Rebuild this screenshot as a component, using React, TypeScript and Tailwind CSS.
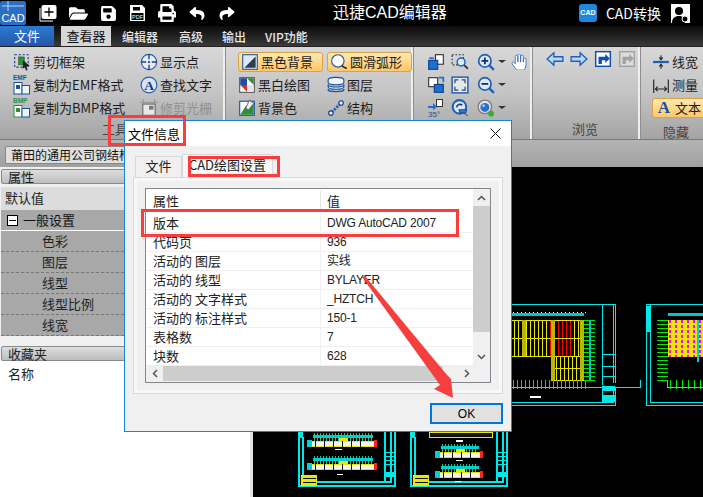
import type { ReactNode } from 'react'
import { FaFolderOpen, FaPrint, FaReply, FaSave, FaShare, FaHandPaper } from 'react-icons/fa'

const cjk = '[font-family:"Noto_Sans_CJK_SC","Liberation_Sans",sans-serif]'

// small ribbon drawings, all on a 16 x 16 box
const Ico = ({ children, size = 18 }: { children: ReactNode; size?: number }) => (
  <svg width={size} height={size} viewBox="0 0 16 16" className="shrink-0">
    {children}
  </svg>
)

const CropIcon = () => (
  <Ico>
    <rect x="1.5" y="1.5" width="12" height="11" fill="none" stroke="#1d3f8a" strokeDasharray="2 1.5" />
    <rect x="5" y="3.500" width="5" height="7" fill="#2f8f3a" stroke="#155a22" strokeWidth=".5" />
    <path d="M9 6.500l6 5-3 .5 1 3-1.500.5-1-3-2 1.500z" fill="#222" />
  </Ico>
)
const CopyIcon = ({ label, color, tint }: { label: string; color: string; tint: string }) => (
  <svg width="18" height="21" viewBox="0 0 18 21" className="shrink-0">
    <text x="0" y="6" fontSize="6.500" fontWeight="700" fill={color} fontFamily="Liberation Sans">{label}</text>
    <rect x="1" y="8.500" width="8" height="11.500" fill="#fff" stroke={tint} />
    <rect x="9" y="11.500" width="7.500" height="8.500" fill="#eef4fc" stroke="#1d4fa0" />
    <rect x="3" y="11" width="4" height="4" fill={tint} />
  </svg>
)
const PointIcon = () => (
  <Ico>
    <circle cx="8" cy="8" r="6.800" fill="#e8eef8" stroke="#2a5aa8" />
    <path d="M8 1v4.500M8 10.500V15M1 8h4.500M10.500 8H15" stroke="#1b3f86" strokeWidth="1.200" />
    <circle cx="8" cy="8" r="1" fill="#1b3f86" />
  </Ico>
)
const FindTextIcon = () => (
  <Ico>
    <circle cx="8" cy="8" r="7" fill="#d6e4f6" stroke="#2a5aa8" />
    <text x="8" y="12.500" textAnchor="middle" fontSize="12" fontWeight="700" fill="#143a86" fontFamily="Liberation Serif">A</text>
  </Ico>
)
const TrimIcon = () => (
  <Ico>
    <path d="M3 0v4M13 0v4M0 3h16" stroke="#9a9a9a" />
    <rect x="2.500" y="4.500" width="11" height="10" fill="#e8e8e8" stroke="#6a6a6a" />
    <rect x="8" y="6" width="4" height="3.500" fill="#7a7a7a" />
  </Ico>
)
const BlackBgIcon = () => (
  <Ico>
    <rect x="1.500" y="1.500" width="13" height="13" fill="#dfe9f6" stroke="#2a5aa8" />
    <path d="M3 13L13 3v10z" fill="#2b3d55" />
  </Ico>
)
const ArcIcon = () => (
  <Ico>
    <circle cx="7" cy="7" r="5.500" fill="#fff" stroke="#2a5aa8" />
    <path d="M10.500 11.500c2 1.500 3 2 4.500 2" fill="none" stroke="#222" strokeWidth="1.300" />
  </Ico>
)
const MonoIcon = () => (
  <Ico>
    <rect x="1.500" y="1.500" width="13" height="13" fill="#fff" stroke="#555" />
    <path d="M2 2h6v6H2z" fill="#1b4fa0" />
    <path d="M8 8h6v6H8z" fill="#e4e4e4" />
    <path d="M2 8h6v6z" fill="#c33" />
    <path d="M8 2h6v6z" fill="#2f8f3a" />
  </Ico>
)
const LayerIcon = () => (
  <Ico>
    <path d="M1 3.500c0-3 14-3 14 0v2c0 3-14 3-14 0zM1 7.500c0 3 14 3 14 0v2c0 3-14 3-14 0zM1 11.500c0 3 14 3 14 0v1c0 2-14 2-14 0z" fill="#f2f6fb" stroke="#1d4fa0" />
  </Ico>
)
const BgColorIcon = () => (
  <Ico>
    <rect x="1.500" y="2" width="13" height="12.500" fill="#fff" stroke="#1d4fa0" />
    <path d="M2 14l5-8 3 3 4-6v11z" fill="#2f8f3a" />
    <path d="M10 1l4 3-5 6-2-2z" fill="#eee" stroke="#333" strokeWidth=".6" />
  </Ico>
)
const StructIcon = () => (
  <Ico>
    <path d="M2 14L14 2" stroke="#2a5aa8" strokeWidth="2.500" strokeDasharray="2 1" />
    <circle cx="3.500" cy="12.500" r="2" fill="#dbe9fa" stroke="#1d3f8a" />
    <circle cx="12.500" cy="3.500" r="2" fill="#dbe9fa" stroke="#1d3f8a" />
  </Ico>
)
const PageIcon = ({ tone = '#1d6fd0', flip }: { tone?: string; flip?: boolean }) => (
  <Ico>
    {flip ? (
      <>
        <rect x="1.500" y="1.500" width="8" height="8" fill="#fff" stroke="#333" />
        <rect x="6.500" y="7.500" width="8" height="7" fill={tone} stroke="#0f3f90" />
        <path d="M10.500 1.500h4v4" fill="none" stroke={tone} strokeWidth="1.500" />
      </>
    ) : (
      <>
        <rect x="7.500" y="1.500" width="7" height="8.500" fill="#fff" stroke="#333" />
        <rect x="1.500" y="6.500" width="8" height="8" fill={tone} stroke="#0f3f90" />
        <path d="M2 4.500h4" stroke={tone} strokeWidth="1.500" />
      </>
    )}
  </Ico>
)
const SelectZoomIcon = () => (
  <Ico>
    <rect x="1" y="1.500" width="10" height="9" fill="none" stroke="#333" strokeDasharray="1.500 1.500" />
    <circle cx="9" cy="8" r="3.500" fill="#dbe9fa" stroke="#1d5fb8" strokeWidth="1.300" />
    <path d="M11.500 10.500l3.500 3.500" stroke="#333" strokeWidth="1.600" />
  </Ico>
)
const FitIcon = () => (
  <Ico>
    <rect x="1" y="1" width="14" height="14" fill="#e3e8ee" stroke="#1d5fb8" strokeWidth="1.300" />
    <path d="M3.500 6.500v-3h3M9.500 3.500h3v3M12.500 9.500v3h-3M6.500 12.500h-3v-3" fill="none" stroke="#445" strokeWidth="1.100" />
  </Ico>
)
const RotateIcon = () => (
  <svg width="18" height="18" viewBox="0 0 18 18" className="shrink-0">
    <rect x="9.500" y="0.500" width="6" height="7" fill="#fff" stroke="#333" />
    <path d="M1 7h5V4l4 4-4 3V9H1z" fill="#1d6fd0" />
    <text x="1" y="17.500" fontSize="8" fill="#1d4fa0" fontFamily="Liberation Sans">35°</text>
  </svg>
)
const LoopZoomIcon = () => (
  <Ico>
    <circle cx="7.500" cy="7" r="6" fill="#dbe9fa" stroke="#1d5fb8" strokeWidth="1.800" />
    <path d="M5 7.500a3 3 0 015-2" fill="none" stroke="#123f8c" strokeWidth="1.500" />
    <path d="M7 9.500h7l-1 3H8zM11 12l4 3" fill="#3a78c8" stroke="#123f8c" strokeWidth=".8" />
  </Ico>
)
const MagnifyIcon = ({ sign }: { sign: '+' | '-' }) => (
  <Ico>
    <circle cx="7" cy="7" r="5.500" fill="#dbe9fa" stroke="#1d5fb8" strokeWidth="1.500" />
    <path d="M11 11l4 4" stroke="#1d5fb8" strokeWidth="2" />
    <path d="M4 7h6" stroke="#0d2f70" strokeWidth="1.600" />
    {sign === '+' && <path d="M7 4v6" stroke="#0d2f70" strokeWidth="1.600" />}
  </Ico>
)
const GlobeIcon = () => (
  <Ico>
    <circle cx="7" cy="7" r="6" fill="#e4e4e4" stroke="#7d7d7d" strokeWidth="1.200" />
    <circle cx="7" cy="7.500" r="4" fill="#2a6fd0" />
    <circle cx="5.800" cy="6" r="1.300" fill="#9cc6f5" />
    <circle cx="12.500" cy="13" r="2.500" fill="#2fae3a" />
  </Ico>
)
const DropMark = () => <span className="ml-[3px] h-0 w-0 border-x-[4px] border-t-[3px] border-x-transparent border-t-[#333]" />
const ArrowIcon = ({ dir }: { dir: 'l' | 'r' }) => (
  <Ico>
    <path
      d={dir === 'l' ? 'M1 8l6-5.500v3.500h8v4H7v3.500z' : 'M15 8L9 2.500V6H1v4h8v3.500z'}
      fill="#bcd7f5"
      stroke="#1d5fb8"
      strokeWidth="1.200"
    />
  </Ico>
)
const NavDocIcon = ({ muted }: { muted?: boolean }) => {
  const edge = muted ? '#a2a2a2' : '#0f4fb0'
  return (
    <Ico>
      <rect x="1.500" y="1.500" width="13" height="13" fill={muted ? '#dcdcdc' : '#fff'} stroke={edge} strokeWidth="1.300" />
      <path d="M4 6h6V3.500l4 4-4 4V9H7v3.500H4z" fill={edge} />
    </Ico>
  )
}
const LineWidthIcon = () => (
  <Ico>
    <path d="M1 8h14" stroke="#1d5fb8" strokeWidth="2" />
    <path d="M8 2v3M8 11v3M6.500 4L8 6l1.500-2M6.500 12L8 10l1.500 2" fill="none" stroke="#222" />
  </Ico>
)
const MeasureIcon = () => (
  <Ico>
    <path d="M1.500 3v12M14.500 3v12M3 11.500h10M5 9.500l-2 2 2 2M11 9.500l2 2-2 2" fill="none" stroke="#222" />
  </Ico>
)

const RibbonRow = ({ icon, label, muted }: { icon: ReactNode; label: string; muted?: boolean }) => (
  <div className={`flex h-[23px] items-center gap-[2px] text-[13px] ${muted ? 'text-[#8f8f8f]' : 'text-[#1c1c1c]'}`}>
    <span className="flex w-[18px] justify-center">{icon}</span>
    <span className="whitespace-nowrap">{label}</span>
  </div>
)

const HotRow = ({ icon, label, className }: { icon: ReactNode; label: string; className: string }) => (
  <div
    className={`flex h-[20px] items-center gap-[2px] rounded-[3px] border border-[#d9a24a] bg-gradient-to-b from-[#ffe9b0] to-[#ffc766] pl-[2px] text-[13px] text-[#1c1c1c] ${className}`}
  >
    <span className="flex w-[18px] justify-center">{icon}</span>
    <span className="whitespace-nowrap">{label}</span>
  </div>
)

const Group = ({ width, label, children, className = '', labelClass = '' }: { width: string; label?: string; children?: ReactNode; className?: string; labelClass?: string }) => (
  <div className={`relative flex h-full shrink-0 flex-col border-r-2 border-r-[#efefef] shadow-[1px_0_0_#8e8e8e] ${width}`}>
    <div className={`flex h-[72px] pt-[3px] ${className}`}>{children}</div>
    <div className={`text-center text-[13px] leading-[20px] text-[#444] ${labelClass}`}>{label}</div>
  </div>
)

const FloatHead = ({ text }: { text: string }) => (
  <div className="mx-[1px] flex h-[15px] items-center rounded-[2px] border border-[#8a8a8a] bg-gradient-to-b from-[#dedede] to-[#bdbdbd] pl-[6px] text-[13px] text-[#222]">
    {text}
  </div>
)

const count = (n: number) => Array.from({ length: n }, (_, i) => i)

// one floor plan of the lower sheets: comb of columns, cyan beam, white and yellow band
const PlanStrip = ({ x, y, w }: { x: number; y: number; w: number }) => (
  <g>
    {count(Math.floor(w / 3)).map((i) => (
      <path key={i} d={`M${x + 1 + i * 3} ${y}V${y + 11}`} stroke="#22c070" />
    ))}
    <rect x={x} y={y + 2} width={w} height="3" fill="#00d0d0" />
    <rect x={x - 1} y={y + 8} width={w + 2} height="5" fill="#f4f4f4" />
    <path d={`M${x - 1} ${y + 8}H${x + w + 1}M${x - 1} ${y + 13}H${x + w + 1}`} stroke="#e8e800" />
    {count(Math.floor(w / 9)).map((i) => (
      <path key={i} d={`M${x + 2 + i * 9} ${y + 8}V${y + 14}`} stroke="#111" />
    ))}
    <rect x={x + w / 2 - 4} y={y + 5} width="9" height="3" fill="#e8e800" />
    <rect x={x - 6} y={y + 7} width="5" height="7" fill="#00d0d0" />
    <rect x={x + w + 1} y={y + 7} width="3" height="7" fill="#ff2020" />
  </g>
)

const Drawings = () => (
  <svg viewBox="253 167 450 330" className="block h-full w-full" shapeRendering="crispEdges">
    {/* sheet A */}
    <path d="M512 304H615V405H512M512 402H613V304M602 304V402" fill="none" stroke="#00e8e8" />
    <rect x="512" y="313" width="72" height="3" fill="#00c8c8" />
    {count(19).map((i) => (
      <path key={`w${i}`} d={`M${513 + i * 4} 312v1M${513 + i * 4} 388v1`} stroke="#fff" />
    ))}
    {count(18).map((i) => (
      <path key={`a${i}`} d={`M${514 + i * 4} 320V356`} stroke={i > 8 && i < 15 ? '#ff0000' : '#e8e800'} />
    ))}
    {count(7).map((i) => (
      <path key={`b${i}`} d={`M${552 + i * 4} 357V380`} stroke="#e8e800" />
    ))}
    <path d="M512 320H584M512 338H584M512 356H584M551 368H584M551 380H584" stroke="#e8e800" />
    <rect x="551" y="320" width="4" height="60" fill="#b8b800" />
    <rect x="580" y="320" width="4" height="60" fill="#b8b800" />
    <rect x="522" y="320" width="4" height="36" fill="#b8b800" />
    {count(16).map((i) => (
      <path key={`c${i}`} d={`M584 ${320 + i * 4}H595`} stroke="#00e800" />
    ))}
    <rect x="589" y="320" width="2" height="60" fill="#00c8c8" />
    {count(19).map((i) => (
      <path key={`d${i}`} d={`M${513 + i * 4} 380V389`} stroke="#00e800" />
    ))}
    <path d="M512 387H584M584 387H640V380" stroke="#00e8e8" />
    <rect x="530" y="396" width="11" height="2" fill="#fff" />
    <path d="M602 354H615M602 366H615M602 376H615" stroke="#00e8e8" />
    <rect x="602" y="386" width="13" height="5" fill="#00e8e8" />
    <rect x="602" y="395" width="13" height="7" fill="#00e8e8" />
    {/* sheet B */}
    <path d="M703 304H646V405H703M703 402H650V304" fill="none" stroke="#00e8e8" />
    <rect x="646" y="306" width="5" height="26" fill="#00e8e8" />
    <rect x="668" y="320" width="35" height="37" fill="#e8e800" />
    {count(6).map((i) => (
      <path key={`e${i}`} d={`M${670 + i * 6} 320V357`} stroke="#ff00ff" strokeWidth="2" strokeDasharray="3 2" />
    ))}
    <rect x="697" y="320" width="2" height="42" fill="#00d0d0" />
    {count(16).map((i) => (
      <path key={`f${i}`} d={`M657 ${320 + i * 4}H668`} stroke="#00e800" />
    ))}
    {count(6).map((i) => (
      <path key={`g${i}`} d={`M${670 + i * 6} 380V389`} stroke="#00e800" />
    ))}
    <rect x="668" y="313" width="35" height="3" fill="#00c8c8" />
    <path d="M668 387H703M667 380V388" stroke="#00e8e8" />
    {/* sheet C */}
    <path d="M299 432V486H395V432M303 437V482H391V432M385 432V482" fill="none" stroke="#00e8e8" strokeWidth="2" />
    <rect x="298" y="432" width="5" height="6" fill="#00e8e8" />
    <rect x="301" y="475" width="16" height="11" fill="#e8e800" />
    <path d="M303 478H316M303 482H316" stroke="#111" />
    <PlanStrip x={313} y={433} w={60} />
    <PlanStrip x={313} y={456} w={60} />
    <rect x="335" y="449" width="7" height="1" fill="#fff" />
    <rect x="337" y="474" width="6" height="1" fill="#fff" />
    <path d="M385 452H394M385 456H394M385 460H394M385 464H394" stroke="#00e8e8" />
    <rect x="385" y="472" width="9" height="5" fill="#00e8e8" />
    {/* sheet D */}
    <path d="M411 432V486H507V432M415 437V482H503V432M497 432V482" fill="none" stroke="#00e8e8" strokeWidth="2" />
    <rect x="410" y="432" width="5" height="6" fill="#00e8e8" />
    <rect x="413" y="475" width="16" height="11" fill="#e8e800" />
    <path d="M415 478H428M415 482H428" stroke="#111" />
    <rect x="429" y="432" width="63" height="5" fill="#111" stroke="#e8e800" />
    <PlanStrip x={441} y={444} w={38} />
    <PlanStrip x={441} y={464} w={38} />
    <rect x="456" y="440" width="7" height="2" fill="#fff" />
    <rect x="456" y="460" width="7" height="1" fill="#fff" />
    <rect x="455" y="481" width="6" height="1" fill="#fff" />
    <path d="M497 452H506M497 456H506M497 460H506M497 464H506" stroke="#00e8e8" />
    <rect x="497" y="472" width="9" height="5" fill="#00e8e8" />
  </svg>
)

const rows: [string, string][] = [
  ['版本', 'DWG AutoCAD 2007'],
  ['代码页', '936'],
  ['活动的 图层', '实线'],
  ['活动的 线型', 'BYLAYER'],
  ['活动的 文字样式', '_HZTCH'],
  ['活动的 标注样式', '150-1'],
  ['表格数', '7'],
  ['块数', '628'],
]

export default function App() {
  return (
    <div className={`relative flex h-[497px] w-[703px] flex-col overflow-hidden bg-[#b0b0b0] ${cjk}`}>
      {/* title bar */}
      <header className="flex h-[26px] shrink-0 items-center bg-black text-white">
        <div className="relative flex h-[24px] w-[26px] flex-col items-center justify-end rounded-[2px] bg-[#2a6fc4] text-[11px] leading-[14px] [font-family:'Liberation_Sans']">
          <svg width="26" height="10" viewBox="0 0 26 10" className="absolute left-0 top-0">
            <path d="M8 0v10M2 5h22" stroke="#bcd7f5" />
          </svg>
          CAD
        </div>
        <div className="ml-[13px] flex items-center gap-[12px]">
          <svg width="18" height="18" viewBox="0 0 18 18">
            <path d="M1 4v13h13" fill="none" stroke="#fff" />
            <rect x="2.500" y="1" width="15" height="14" rx="2" fill="#fff" />
            <path d="M10 3.500v9M5.500 8h9" stroke="#000" strokeWidth="1.300" />
          </svg>
          <FaFolderOpen className="h-[17px] w-[19px]" />
          <FaSave className="h-[17px] w-[17px]" />
          <svg width="17" height="18" viewBox="0 0 17 18">
            <path d="M1 1h12l3 3v13H1z" fill="#fff" />
            <rect x="4" y="3" width="7" height="3.500" fill="#000" />
            <rect x="2.500" y="9" width="12" height="7" fill="#000" />
            <text x="8.500" y="15" textAnchor="middle" fontSize="5.500" fill="#fff" fontFamily="Liberation Sans">PDF</text>
          </svg>
          <FaPrint className="h-[18px] w-[18px]" />
          <FaReply className="h-[15px] w-[18px]" />
          <FaShare className="h-[15px] w-[18px]" />
        </div>
        <div className="ml-[97px] text-[16px] [font-family:'Liberation_Sans','Noto_Sans_CJK_SC']">迅捷CAD编辑器</div>
        <div className="ml-auto flex items-center">
          <div className="flex h-[18px] w-[18px] items-center justify-center rounded-[3px] bg-[#1e88e0] text-[7px] font-bold [font-family:'Liberation_Sans']">CAD</div>
          <span className="ml-[9px] text-[14px]">CAD转换</span>
          <div className="ml-[10px] mr-[13px] flex h-[19px] w-[19px] items-end justify-center bg-white">
            <svg width="17" height="17" viewBox="0 0 17 17">
              <circle cx="7" cy="5" r="4" fill="#000" />
              <path d="M0 17c0-5 3-7 7-7s6 2 6 7z" fill="#000" />
              <circle cx="13" cy="13" r="3" fill="#000" stroke="#fff" />
            </svg>
          </div>
        </div>
      </header>

      {/* menu tabs */}
      <nav className="flex h-[20px] shrink-0 items-end bg-gradient-to-b from-[#0c0c0c] to-[#3a3a3a] text-[12px] text-[#e8e8e8]">
        <div className="flex h-[20px] w-[54px] items-center justify-center bg-gradient-to-b from-[#2f7ad0] to-[#2257a8] text-[13px] text-white">文件</div>
        <div className="ml-[7px] flex h-[20px] w-[50px] items-center justify-center bg-[#d6d6d6] text-[13px] text-[#111]">查看器</div>
        <span className="ml-[11px] font-medium">编辑器</span>
        <span className="ml-[21px] font-medium">高级</span>
        <span className="ml-[19px] font-medium">输出</span>
        <span className="ml-[19px] font-medium">VIP功能</span>
      </nav>

      {/* ribbon */}
      <section className="flex h-[94px] shrink-0 border-y border-[#222] border-b-[#777] bg-gradient-to-b from-[#d8d8d8] via-[#c4c4c4] to-[#a4a4a4]">
        <Group width="w-[225px]" label="工具" labelClass="pl-[7px]" className="pl-[13px]">
          <div className="w-[127px]">
            <RibbonRow icon={<CropIcon />} label="剪切框架" />
            <RibbonRow icon={<CopyIcon label="EMF" color="#1d4fa0" tint="#1d4fa0" />} label="复制为EMF格式" />
            <RibbonRow icon={<CopyIcon label="BMP" color="#2f8f3a" tint="#2f8f3a" />} label="复制为BMP格式" />
          </div>
          <div>
            <RibbonRow icon={<PointIcon />} label="显示点" />
            <RibbonRow icon={<FindTextIcon />} label="查找文字" />
            <RibbonRow icon={<TrimIcon />} label="修剪光栅" muted />
          </div>
        </Group>
        <Group width="w-[188px]" className="gap-[4px] pl-[13px]">
          <div className="w-[85px]">
            <div className="flex h-[23px] items-center"><HotRow className="w-[85px]" icon={<BlackBgIcon />} label="黑色背景" /></div>
            <RibbonRow icon={<MonoIcon />} label="黑白绘图" />
            <RibbonRow icon={<BgColorIcon />} label="背景色" />
          </div>
          <div className="w-[85px]">
            <div className="flex h-[23px] items-center"><HotRow className="w-[85px]" icon={<ArcIcon />} label="圆滑弧形" /></div>
            <RibbonRow icon={<LayerIcon />} label="图层" />
            <RibbonRow icon={<StructIcon />} label="结构" />
          </div>
        </Group>
        <Group width="w-[119px]" className="pl-[14px]">
          <div className="grid h-[69px] grid-cols-[24px_26px_34px_18px] grid-rows-3 items-center">
            <PageIcon />
            <SelectZoomIcon />
            <span className="flex items-center"><MagnifyIcon sign="+" /><DropMark /></span>
            <span className="relative h-[16px] w-[16px]">
              <FaHandPaper className="h-[16px] w-[16px] text-white" stroke="#1d5fb8" strokeWidth={24} />
            </span>
            <PageIcon flip />
            <FitIcon />
            <span className="flex items-center"><MagnifyIcon sign="-" /><DropMark /></span>
            <span />
            <RotateIcon />
            <LoopZoomIcon />
            <span className="flex items-center"><GlobeIcon /><DropMark /></span>
            <span />
          </div>
        </Group>
        <Group width="w-[108px]" label="浏览" className="gap-[6px] pl-[14px]">
          <ArrowIcon dir="l" />
          <ArrowIcon dir="r" />
          <NavDocIcon />
          <NavDocIcon muted />
        </Group>
        <div className="flex-1 pl-[12px] pt-[3px]">
          <RibbonRow icon={<LineWidthIcon />} label="线宽" />
          <RibbonRow icon={<MeasureIcon />} label="测量" />
          <div className="flex h-[23px] items-center">
            <HotRow className="w-[60px]" icon={<span className="text-[17px] leading-none font-bold text-[#1d4fa0] [font-family:'Liberation_Serif']">A</span>} label="文本" />
          </div>
          <div className="mt-[3px] pr-[12px] text-center text-[13px] leading-[20px] text-[#444]">隐藏</div>
        </div>
      </section>

      {/* document tab strip */}
      <div className="flex h-[27px] shrink-0 items-end bg-gradient-to-b from-[#b4b4b4] to-[#a0a0a0] pb-[3px] pl-[5px]">
        <div className="h-[18px] whitespace-nowrap rounded-t-[2px] border border-[#888] bg-[#e0e0e0] pl-[5px] pr-[20px] text-[12px] leading-[16px] text-[#111]">莆田的通用公司钢结构</div>
      </div>

      <main className="flex min-h-0 flex-1 bg-black">
        {/* side panel */}
        <aside className="flex w-[253px] shrink-0 flex-col border-r-[3px] border-r-[#e4e4e4] bg-[#f0f0f0] pt-[2px]">
          <FloatHead text="属性" />
          <div className="mx-[1px] mt-[3px] flex h-[23px] items-center bg-[#dcdcdc] pb-[2px] pl-[4px] text-[13px] text-[#222]">默认值</div>
          <div className="mx-[1px] flex h-[21px] items-center gap-[5px] border-b border-white bg-[#a8a8a8] pl-[6px] text-[13px] text-[#111]">
            <span className="flex h-[11px] w-[11px] items-center justify-center border border-black bg-white">
              <span className="h-px w-[7px] bg-black" />
            </span>
            一般设置
          </div>
          {['色彩', '图层', '线型', '线型比例', '线宽'].map((name) => (
            <div key={name} className="mx-[1px] flex h-[21px] items-center border-b border-dashed border-[#777] bg-[#a8a8a8] pl-[41px] text-[13px] text-[#222]">
              {name}
            </div>
          ))}
          <div className="h-[10px]" />
          <FloatHead text="收藏夹" />
          <div className="flex-1 bg-white pl-[8px] pt-[3px] text-[13px] text-[#222]">名称</div>
        </aside>
        <div className="min-w-0 flex-1">
          <Drawings />
        </div>
      </main>

      {/* file info dialog */}
      <div className="absolute left-[124px] top-[120px] flex h-[312px] w-[388px] flex-col border border-[#1883d7] bg-[#f0f0f0]">
        <div className="flex h-[25px] shrink-0 items-center justify-between bg-white pl-[3px] pr-[10px] text-[13px] text-black">
          文件信息
          <svg width="11" height="11" viewBox="0 0 11 11"><path d="M.5.5l10 10M10.500.5l-10 10" stroke="#111" /></svg>
        </div>
        <div className="flex h-[31px] shrink-0 items-end pl-[10px] text-[13px] text-[#222]">
          <div className="flex h-[21px] w-[47px] items-center justify-center border border-b-0 border-[#d9d9d9] bg-[#f0f0f0] pb-[2px]">文件</div>
          <div className="flex h-[23px] w-[91px] items-center justify-center border border-b-0 border-[#d9d9d9] bg-[#f8f8f8] pb-[3px]">CAD绘图设置</div>
        </div>
        <div className="mx-[8px] flex h-[217px] shrink-0 border border-[#d9d9d9] bg-[#f8f8f8] p-[3px]">
          <div className="flex flex-1 bg-[#f0f0f0] px-[8px] py-[7px]">
            <div className="flex flex-1 flex-col border border-[#828790] bg-white text-[13px] text-[#222]">
              <div className="flex min-h-0 flex-1">
                <div className="flex-1">
                  <div className="flex h-[25px] items-center pb-[2px]">
                    <span className="w-[175px] border-r border-[#e5e5e5] pl-[7px]">属性</span>
                    <span className="pl-[6px]">值</span>
                  </div>
                  {rows.map(([key, value]) => (
                    <div key={key} className="flex h-[19px] items-center border-b border-[#f0f0f0] text-[12px]">
                      <span className="w-[175px] border-r border-[#f0f0f0] pl-[7px] text-[13px]">{key}</span>
                      <span className="pl-[6px] tracking-[-0.2px] [font-family:'Liberation_Sans','Noto_Sans_CJK_SC']">{value}</span>
                    </div>
                  ))}
                </div>
                <div className="flex w-[17px] shrink-0 flex-col bg-[#f0f0f0] text-[#555]">
                  <div className="flex h-[17px] items-center justify-center">
                    <svg width="9" height="6" viewBox="0 0 9 6"><path d="M1 5l3.500-3.500L8 5" fill="none" stroke="#555" strokeWidth="1.500" /></svg>
                  </div>
                  <div className="mb-[16px] flex-1 bg-[#cdcdcd]" />
                  <div className="flex h-[17px] items-center justify-center">
                    <svg width="9" height="6" viewBox="0 0 9 6"><path d="M1 1l3.500 3.500L8 1" fill="none" stroke="#555" strokeWidth="1.500" /></svg>
                  </div>
                </div>
              </div>
              <div className="flex h-[17px] shrink-0 items-center bg-[#f0f0f0]">
                <div className="flex w-[17px] justify-center">
                  <svg width="6" height="9" viewBox="0 0 6 9"><path d="M5 1L1.500 4.500 5 8" fill="none" stroke="#555" strokeWidth="1.500" /></svg>
                </div>
                <div className="h-[15px] w-[280px] bg-[#cdcdcd]" />
                <div className="flex flex-1 justify-end pr-[20px]">
                  <svg width="6" height="9" viewBox="0 0 6 9"><path d="M1 1l3.500 3.500L1 8" fill="none" stroke="#555" strokeWidth="1.500" /></svg>
                </div>
              </div>
            </div>
          </div>
        </div>
        <div className="flex flex-1 items-start justify-end pr-[8px] pt-[9px]">
          <button className="flex h-[21px] w-[73px] items-center justify-center border-2 border-[#0078d7] bg-[#e1e1e1] text-[12px] text-black [font-family:'Liberation_Sans']">OK</button>
        </div>
      </div>

      {/* red review marks */}
      <div className="absolute left-[108px] top-[115px] h-[31px] w-[78px] border-[3px] border-[#fb3c3c]" />
      <div className="absolute left-[188px] top-[156px] h-[21px] w-[92px] border-[3px] border-[#fb3c3c]" />
      <div className="absolute left-[141px] top-[209px] h-[28px] w-[318px] border-[3px] border-[#fb3c3c]" />
      <svg className="absolute left-0 top-0 h-[497px] w-[703px]" viewBox="0 0 703 497">
        <path d="M362 277L365 276L447 375L451 379L453 398L434 389L440 385Z" fill="#f53f3f" />
      </svg>
    </div>
  )
}
